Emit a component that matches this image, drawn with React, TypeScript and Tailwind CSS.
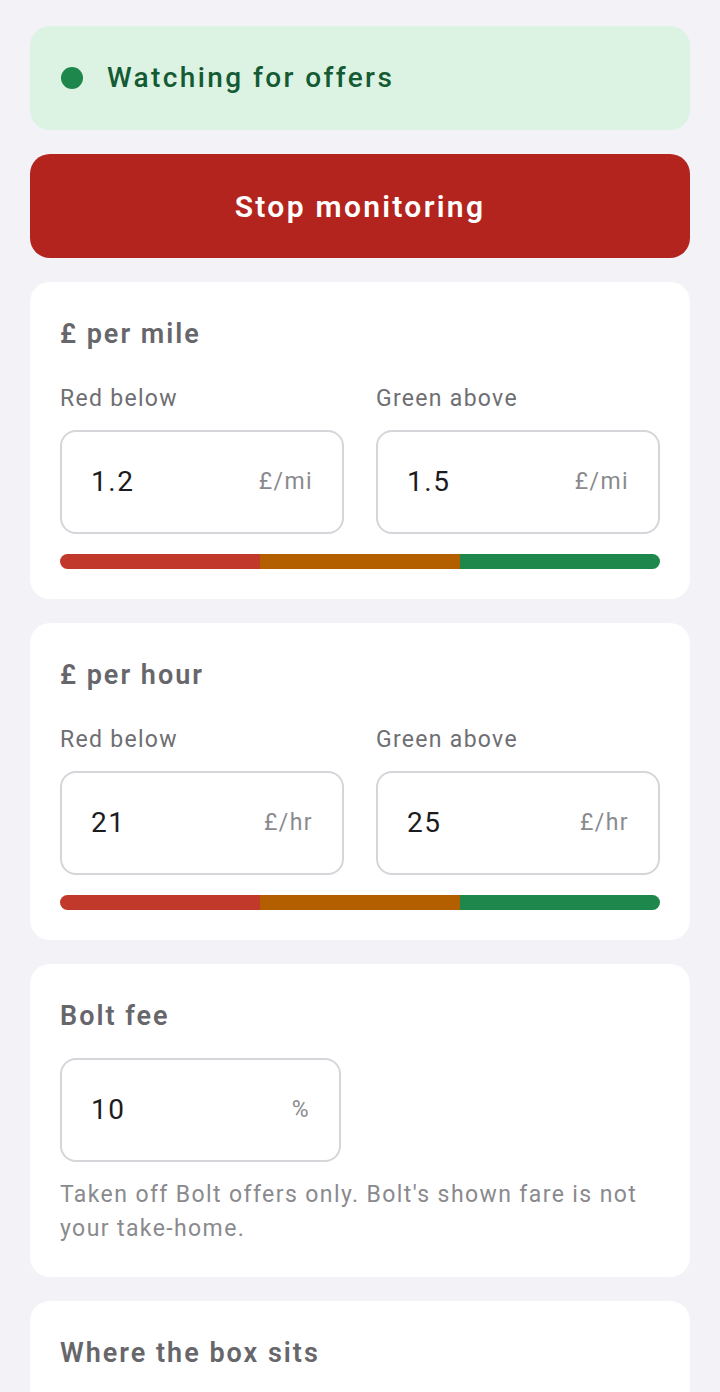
import React from "react";

function Field({ value, unit }: { value: string; unit: string }) {
  return (
    <div className="flex h-[104px] items-center justify-between rounded-[16px] border-2 border-[#d6d6da] bg-white pl-[29px] pr-[29px]">
      <span className="text-[28px] tracking-[1.6px] text-[#1c1c1e]">{value}</span>
      <span className="text-[23px] tracking-[1.4px] text-[#8a8a8e]">{unit}</span>
    </div>
  );
}

function Bar() {
  return (
    <div className="mt-[20px] flex h-[15px] overflow-hidden rounded-full">
      <div className="flex-1 bg-[#c0392b]" />
      <div className="flex-1 bg-[#b35f00]" />
      <div className="flex-1 bg-[#1e874b]" />
    </div>
  );
}

function RangeCard({ title, lo, hi, unit }: { title: string; lo: string; hi: string; unit: string }) {
  return (
    <div className="rounded-[20px] bg-white px-[30px] pt-[32px] pb-[30px]">
      <div className="text-[27px] font-semibold leading-[40px] tracking-[2px] text-[#66666b]">{title}</div>
      <div className="mt-[30px] grid grid-cols-2 gap-[32px]">
        <div>
          <div className="text-[23px] leading-[30px] tracking-[1.3px] text-[#6e6e73]">Red below</div>
          <div className="mt-[16px]">
            <Field value={lo} unit={unit} />
          </div>
        </div>
        <div>
          <div className="text-[23px] leading-[30px] tracking-[1.3px] text-[#6e6e73]">Green above</div>
          <div className="mt-[16px]">
            <Field value={hi} unit={unit} />
          </div>
        </div>
      </div>
      <Bar />
    </div>
  );
}

export default function App() {
  return (
    <div
      className="min-h-[1392px] bg-[#f2f2f7] px-[30px] pt-[26px] pb-[40px]"
      style={{ fontFamily: "Roboto, 'Noto Sans', sans-serif" }}
    >
      <div className="flex flex-col gap-[24px]">
        <div className="flex h-[104px] items-center gap-[24px] rounded-[20px] bg-[#dcf3e3] px-[31px]">
          <div className="h-[22px] w-[22px] rounded-full bg-[#1e874b]" />
          <div className="text-[28px] font-medium tracking-[2.4px] text-[#145a32]">Watching for offers</div>
        </div>
        <button className="flex h-[104px] w-full items-center justify-center rounded-[20px] bg-[#b3241e] text-[30px] font-semibold tracking-[2.3px] text-white">
          Stop monitoring
        </button>
        <RangeCard title="£ per mile" lo="1.2" hi="1.5" unit="£/mi" />
        <RangeCard title="£ per hour" lo="21" hi="25" unit="£/hr" />
        <div className="rounded-[20px] bg-white px-[30px] pt-[32px] pb-[31px]">
          <div className="text-[27px] font-semibold leading-[40px] tracking-[2px] text-[#66666b]">Bolt fee</div>
          <div className="mt-[22px] w-[281px]">
            <Field value="10" unit="%" />
          </div>
          <div className="mt-[16px] text-[23px] leading-[34px] tracking-[1.4px] text-[#8a8a8e]">
            Taken off Bolt offers only. Bolt's shown fare is not your take-home.
          </div>
        </div>
        <div className="min-h-[200px] rounded-[20px] bg-white px-[30px] pt-[32px] pb-[30px]">
          <div className="text-[27px] font-semibold leading-[40px] tracking-[2px] text-[#66666b]">Where the box sits</div>
        </div>
      </div>
    </div>
  );
}
